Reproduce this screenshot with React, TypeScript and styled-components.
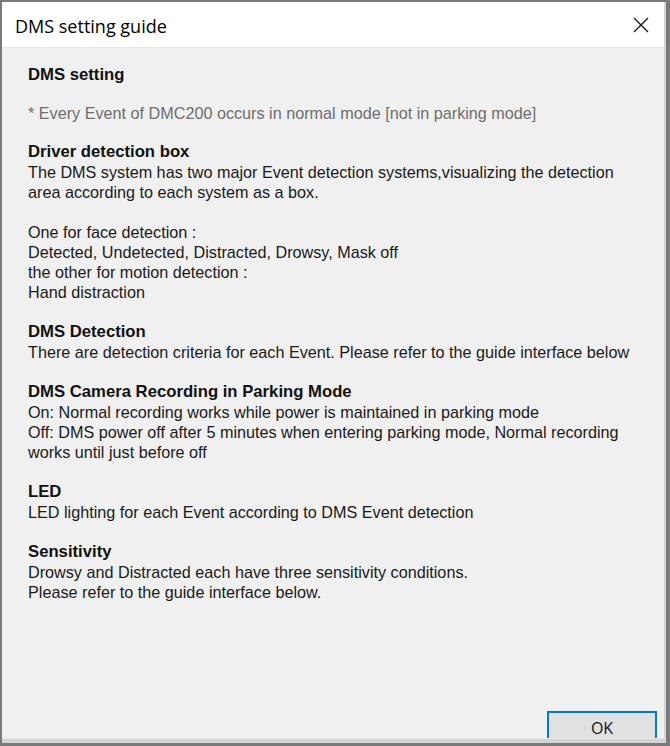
import React from "react"
import styled, { createGlobalStyle } from "styled-components"

type Section = {
  title: string
  lines: string[]
}

const sections: Section[] = [
  {
    title: "Driver detection box",
    lines: [
      "The DMS system has two major Event detection systems,visualizing the detection",
      "area according to each system as a box.",
      "",
      "One for face detection :",
      "Detected, Undetected, Distracted, Drowsy, Mask off",
      "the other for motion detection :",
      "Hand distraction",
    ],
  },
  {
    title: "DMS Detection",
    lines: ["There are detection criteria for each Event. Please refer to the guide interface below"],
  },
  {
    title: "DMS Camera Recording in Parking Mode",
    lines: [
      "On: Normal recording works while power is maintained in parking mode",
      "Off: DMS power off after 5 minutes when entering parking mode, Normal recording",
      "works until just before off",
    ],
  },
  {
    title: "LED",
    lines: ["LED lighting for each Event according to DMS Event detection"],
  },
  {
    title: "Sensitivity",
    lines: [
      "Drowsy and Distracted each have three sensitivity conditions.",
      "Please refer to the guide interface below.",
    ],
  },
]

function CloseIcon() {
  return (
    <svg width="16" height="16" viewBox="0 0 16 16">
      <path d="M1 1 L15 15 M15 1 L1 15" stroke="#111" strokeWidth="1.3" fill="none" />
    </svg>
  )
}

function App() {
  return (
    <>
      <GlobalStyle />
      <Window>
        <TitleBar>
          <Title>DMS setting guide</Title>
          <CloseButton aria-label="Close">
            <CloseIcon />
          </CloseButton>
        </TitleBar>

        <Content>
          <Heading>DMS setting</Heading>
          <Note>* Every Event of DMC200 occurs in normal mode [not in parking mode]</Note>

          <Guide>
            {sections.map((section) => (
              <Block key={section.title}>
                <Heading>{section.title}</Heading>
                {section.lines.map((line, i) => (
                  <Line key={i}>{line || "\u00a0"}</Line>
                ))}
              </Block>
            ))}
          </Guide>

          <Footer>
            <OkButton>OK</OkButton>
          </Footer>
        </Content>
        <BottomStrip />
      </Window>
    </>
  )
}

export default App

const GlobalStyle = createGlobalStyle`
  html, body {
    margin: 0;
    padding: 0;
    background: #7a7a7a;
  }
`

const Window = styled.div`
  box-sizing: border-box;
  width: 670px;
  height: 746px;
  display: flex;
  flex-direction: column;
  border-style: solid;
  border-color: #7a7a7a;
  border-width: 2px 4px 3px 2px;
  background: #f0f0f0;
  overflow: hidden;
`

const TitleBar = styled.div`
  height: 46px;
  flex: none;
  display: flex;
  align-items: center;
  justify-content: space-between;
  background: #ffffff;
  border-right: 2px solid #d4d4d4;
  border-bottom: 1px solid #e6e6e6;
  box-sizing: border-box;
`

const Title = styled.div`
  padding-left: 13px;
  padding-top: 3px;
  font-family: "Open Sans", "Noto Sans", sans-serif;
  font-size: 18px;
  color: #000;
`

const CloseButton = styled.div`
  width: 46px;
  height: 46px;
  display: flex;
  align-items: center;
  justify-content: center;
  padding-top: 1px;
  box-sizing: border-box;
`

const Content = styled.div`
  flex: 1;
  display: flex;
  flex-direction: column;
  padding: 17px 0 0 26px;
  border-right: 2px solid #d4d4d4;
  font-family: "Liberation Sans", Arial, sans-serif;
  font-size: 16.2px;
  line-height: 20px;
  color: #1a1a1a;
  min-height: 0;
`

const Heading = styled.div`
  font-weight: bold;
  font-size: 16.7px;
  color: #111;
`

const Note = styled.div`
  margin-top: 18px;
  color: #6e6e6e;
`

const Guide = styled.div`
  margin-top: 19px;
  display: flex;
  flex-direction: column;
  gap: 20px;
`

const Block = styled.div`
  display: flex;
  flex-direction: column;
`

const Line = styled.div`
  white-space: pre;
`

const Footer = styled.div`
  margin-top: auto;
  display: flex;
  justify-content: flex-end;
  padding-right: 7px;
`

const OkButton = styled.div`
  box-sizing: border-box;
  width: 110px;
  height: 27px;
  display: flex;
  align-items: center;
  justify-content: center;
  padding-top: 4px;
  border: 2px solid #0078d7;
  border-bottom: none;
  background: #e1e1e1;
  font-family: "Open Sans", "Noto Sans", sans-serif;
  font-size: 16px;
  color: #111;
`

const BottomStrip = styled.div`
  height: 4px;
  flex: none;
  background: #d4d4d4;
  border-top: 1px solid #e8e8e8;
`
